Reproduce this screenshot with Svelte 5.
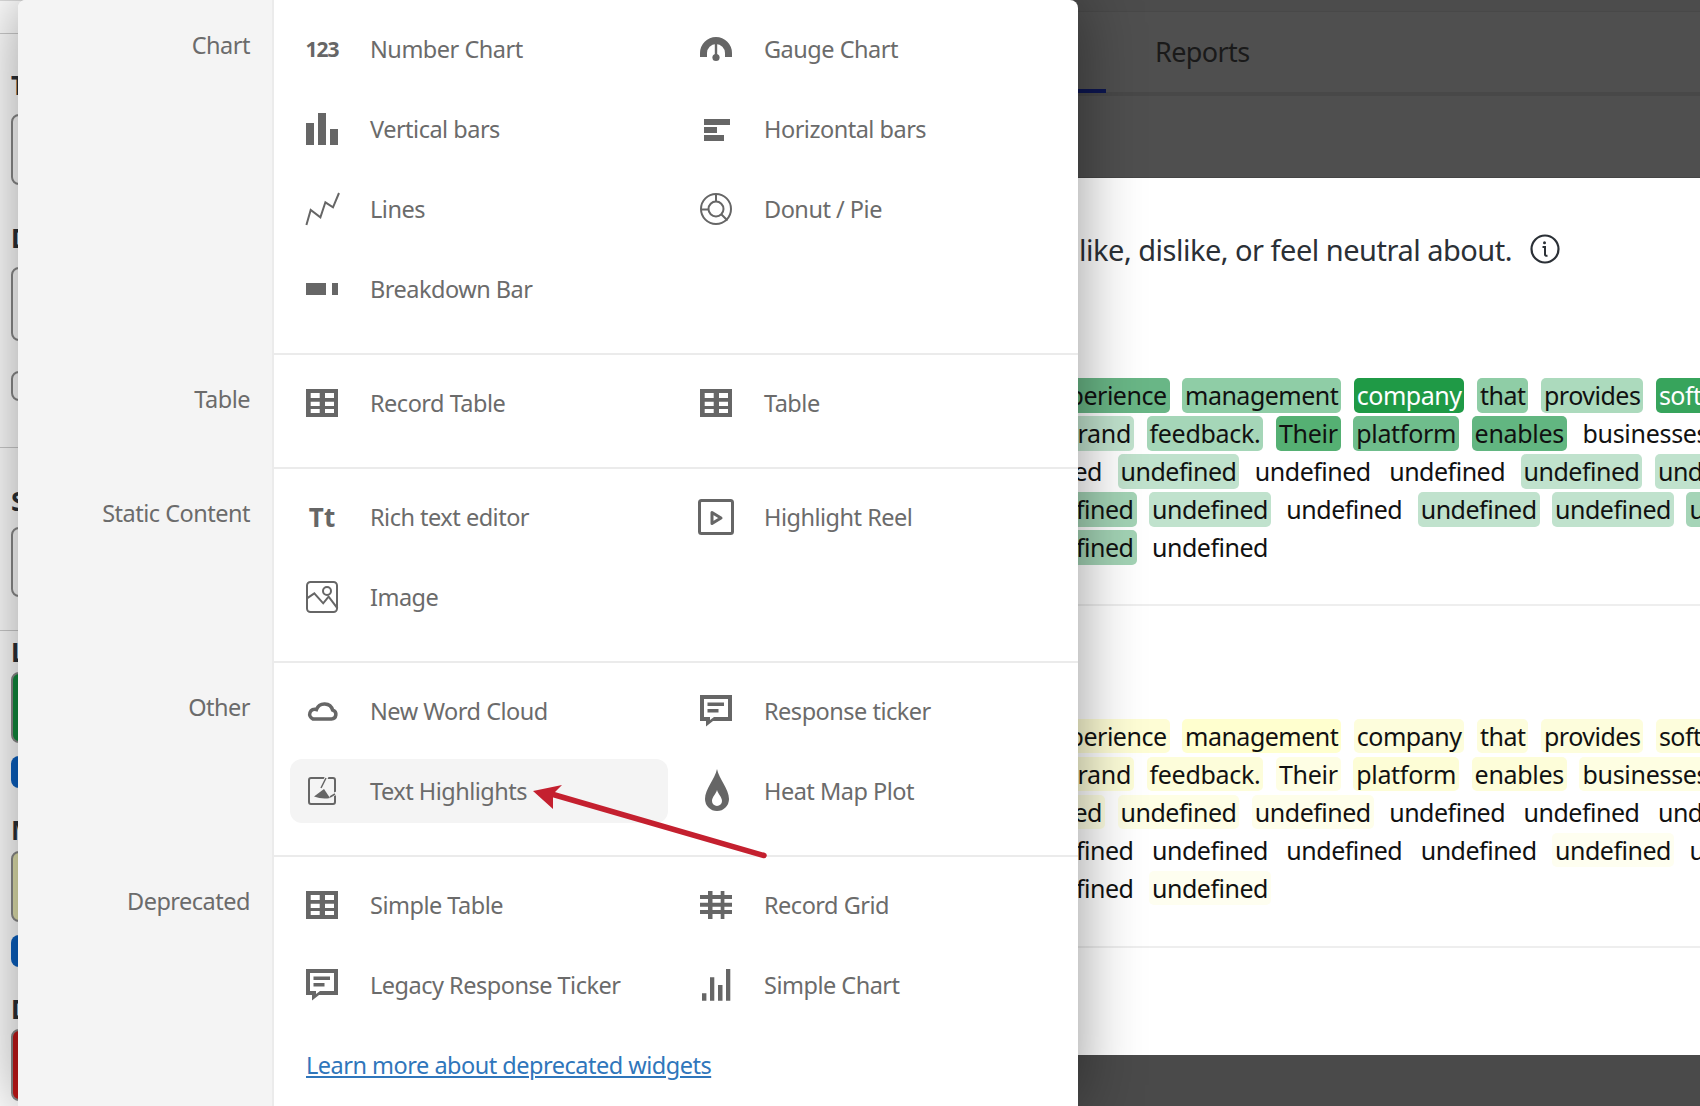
<script>
	const sections = [
		{
			label: "Chart",
			items: [
				["Number Chart", "number"],
				["Gauge Chart", "gauge"],
				["Vertical bars", "vbars"],
				["Horizontal bars", "hbars"],
				["Lines", "lines"],
				["Donut / Pie", "donut"],
				["Breakdown Bar", "breakdown"]
			]
		},
		{
			label: "Table",
			items: [
				["Record Table", "table"],
				["Table", "table"]
			]
		},
		{
			label: "Static Content",
			items: [
				["Rich text editor", "rich"],
				["Highlight Reel", "reel"],
				["Image", "image"]
			]
		},
		{
			label: "Other",
			items: [
				["New Word Cloud", "cloud"],
				["Response ticker", "ticker"],
				["Text Highlights", "highlights", true],
				["Heat Map Plot", "flame"]
			]
		},
		{
			label: "Deprecated",
			items: [
				["Simple Table", "table"],
				["Record Grid", "grid"],
				["Legacy Response Ticker", "ticker"],
				["Simple Chart", "simple"]
			]
		}
	];

	const u = "undefined";
	const greenLines = [
		{ at: 472.5, ls: -0.5, lead: ["experience", "#69b686"], words: [["management", "#8fcda6"], ["company", "#1f9a46", true], ["that", "#8fcda6"], ["provides", "#acdabd"], ["software", "#37a45c", true]] },
		{ at: 437, ls: -0.3, lead: ["brand", "#c0e2cd"], words: [["feedback.", "#a5d6b8"], ["Their", "#55b073"], ["platform", "#6fbd8c"], ["enables", "#62b681"], ["businesses", ""]] },
		{ at: 408, ls: -0.5, lead: [u, ""], words: [[u, "#c0e2cd"], [u, ""], [u, ""], [u, "#c0e2cd"], [u, "#c0e2cd"]] },
		{ at: 439.5, ls: -0.5, lead: [u, "#a3d3b5"], words: [[u, "#c0e2cd"], [u, ""], [u, "#c0e2cd"], [u, "#c0e2cd"], [u, "#a5d4b7"]] },
		{ at: 439.5, ls: -0.5, lead: [u, "#a3d3b5"], words: [[u, ""]] }
	];
	const yellowLines = [
		{ at: 472.5, ls: -0.5, lead: ["experience", "#fefdd5"], words: [["management", "#ffffcf"], ["company", "#fdfddc"], ["that", "#fdfddc"], ["provides", "#fdfddc"], ["software", "#fdfddc"]] },
		{ at: 437, ls: -0.3, lead: ["brand", "#fdfdd8"], words: [["feedback.", "#fdfdda"], ["Their", "#fefee4"], ["platform", "#fdfdd6"], ["enables", "#fdfdd9"], ["businesses", "#fefee2"]] },
		{ at: 408, ls: -0.5, lead: [u, "#fdfde0"], words: [[u, "#fefee5"], [u, "#fefeea"], [u, ""], [u, ""], [u, ""]] },
		{ at: 439.5, ls: -0.5, lead: [u, ""], words: [[u, ""], [u, ""], [u, ""], [u, "#fefef0"], [u, ""]] },
		{ at: 439.5, ls: -0.5, lead: [u, ""], words: [[u, "#fefef0"]] }
	];
</script>

{#snippet icon(name)}
	{#if name === "number"}
		<span class="glyph num">123</span>
	{:else if name === "rich"}
		<span class="glyph tt">Tt</span>
	{:else}
		<svg class="ico" viewBox="0 0 32 32" aria-hidden="true">
			{#if name === "gauge"}
				<path d="M0 24v-4a16 16 0 0 1 32 0v4h-7v-4a9 9 0 0 0-18 0v4z" />
				<rect x="14.8" y="9" width="2.4" height="15" />
				<circle cx="16" cy="24.5" r="3.6" />
			{:else if name === "vbars"}
				<path d="M0 10h8v22H0zM12 0h8v32h-8zM24 16h8v16h-8z" />
			{:else if name === "hbars"}
				<path d="M4 6h26v6H4zM4 14h13v6H4zM4 22h20v6H4z" />
			{:else if name === "lines"}
				<polyline class="line" stroke-width="2" points="0.4,32 4.7,17 14.4,24.3 19.4,9.3 27,14.3 33,0" />
			{:else if name === "donut"}
				<circle class="line" stroke-width="2" cx="16" cy="16" r="15" />
				<circle class="line" stroke-width="2" cx="16" cy="16" r="7.5" />
				<path class="line" stroke-width="2" d="M16 1v7.5M1 16.5h7.500M21.500 21.500l6 6" />
			{:else if name === "breakdown"}
				<path d="M0 10h20v12H0zM26 10h6v12h-6z" />
			{:else if name === "table"}
				<path fill-rule="evenodd" d="M0 2h32v28H0zM4.700 6v5h9V6zM19 6v5h9V6zM4.700 14.700V19h9v-4.300zM19 14.700V19h9v-4.300zM4.700 22v4h9v-4zM19 22v4h9v-4z" />
			{:else if name === "reel"}
				<rect class="line" stroke-width="3" x="-0.500" y="-0.500" width="33" height="33" rx="2" />
				<path class="line" stroke-width="3" stroke-linejoin="round" d="M12 11.500v11l9-5.500z" />
			{:else if name === "image"}
				<rect class="line" stroke-width="2" x="1" y="1" width="30" height="30" rx="3.500" />
				<circle class="line" stroke-width="2" cx="21" cy="10" r="4" />
				<polyline class="line" stroke-width="2" points="1,17.300 8.300,12.300 17.200,22.300 22.600,15.700 31.500,27.300" />
			{:else if name === "cloud"}
				<path class="line" stroke-width="3.500" d="M7 24h18.500a4.500 4.500 0 0 0 1.200-8.800a8.500 8.500 0 0 0-16.200-.700a5 5 0 0 0-3.500 9.500z" />
			{:else if name === "ticker"}
				<path fill-rule="evenodd" d="M0 0h32v26H13l-7 5.500V26H0zM4 4v18h6v3l4-3h14V4z" />
				<path d="M7.500 7.500H24V11H7.500zM7.500 14h11v3.500h-11z" />
			{:else if name === "highlights"}
				<rect class="line" stroke-width="2" x="3" y="3" width="26" height="26" rx="2" />
				<path d="M18 14 8 21.500q8 3 16 1.500z" />
				<path class="cut-line" d="M21 1l-5 11M24 21l7-3" />
				<path class="line thin" d="M20 3l-5 10M24 22l5-3" />
			{:else if name === "flame"}
				<path fill-rule="evenodd" d="M17-6c2 10 12 20 12 30a12 12 0 0 1-24 0C5 14 15 4 17-6zM17 15c-1 4-5 7-5 11a5 5 0 0 0 10 0c0-4-4-7-5-11z" />
			{:else if name === "grid"}
				<path d="M0 6h32v4H0zM0 13.700h32v4H0zM0 21h32v4H0zM8 2h4.500v28H8zM20.700 2h3.700v28h-3.700z" />
			{:else if name === "simple"}
				<path d="M2 24.300h4.400v7.400H2zM10 8.300h4.300v23.400H10zM18 16h4.500v15.700H18zM26 0h4.300v31.700H26z" />
			{/if}
		</svg>
	{/if}
{/snippet}

{#snippet lines(list)}
	{#each list as line}
		<div class="words" style="letter-spacing: {line.ls}px">
			<div class="lead" style="width: {line.at}px">
				<span class="tag" style="background: {line.lead[1] || 'transparent'}">{line.lead[0]}</span>
			</div>
			{#each line.words as w}
				<span class="tag" class:light={w[2]} style="background: {w[1] || 'transparent'}">{w[0]}</span>
			{/each}
		</div>
	{/each}
{/snippet}

<div class="page">
	<aside class="side">
		<div class="side-top"></div>
		<b class="t-title">Title</b>
		<div class="box b-title"></div>
		<b class="t-desc">Description</b>
		<div class="box b-desc"></div>
		<div class="box b-check"></div>
		<div class="rule r-one"></div>
		<b class="t-sent">Scale</b>
		<div class="box b-sent"></div>
		<div class="rule r-two"></div>
		<b class="t-like">Like</b>
		<div class="box green"></div>
		<div class="pill"></div>
		<b class="t-mid">Mixed</b>
		<div class="box pale"></div>
		<div class="pill"></div>
		<b class="t-dis">Dislike</b>
		<div class="box red"></div>
	</aside>

	<main class="main">
		<header class="head">
			<div class="band"></div>
			<nav class="tabs">
				<span class="tab active">Edit</span>
				<span class="tab">Reports</span>
			</nav>
		</header>
		<section class="body">
			<div class="question">
				<span>Highlight what you like, dislike, or feel neutral about.</span>
				<svg class="info" viewBox="0 0 30 30" aria-hidden="true">
					<circle cx="15" cy="15" r="13.500" fill="none" stroke="#2b3036" stroke-width="2.200" />
					<circle cx="14.500" cy="8.800" r="1.500" fill="#2b3036" />
					<path d="M12.500 13h2.500v7.500q0 1.500 2.500 1.200" fill="none" stroke="#2b3036" stroke-width="2" />
				</svg>
			</div>
			<div class="block first">
				{@render lines(greenLines)}
			</div>
			<div class="block second">
				{@render lines(yellowLines)}
			</div>
		</section>
		<footer class="foot"></footer>
	</main>

	<div class="panel">
		{#each sections as s}
			<div class="section">
				<div class="label">{s.label}</div>
				<div class="items">
					<div class="grid">
						{#each s.items as item}
							<div class="row" class:hot={item[2]}>
								<span class="slot">{@render icon(item[1])}</span>
								<span>{item[0]}</span>
							</div>
						{/each}
					</div>
					{#if s.label === "Deprecated"}
						<a class="more" href="#more">Learn more about deprecated widgets</a>
					{/if}
				</div>
			</div>
		{/each}
	</div>

	<svg class="arrow" viewBox="0 0 1700 1106" aria-hidden="true">
		<line x1="764" y1="855.500" x2="548" y2="793" stroke="#c4202f" stroke-width="5.500" stroke-linecap="round" />
		<path d="M533 791 562 785 553 794 553 809z" fill="#c4202f" />
	</svg>
</div>

<style>
	:global(body) {
		background: #fff;
		overflow: hidden;
	}

	.page {
		position: relative;
		display: flex;
		width: 1700px;
		height: 1106px;
		overflow: hidden;
		font-family: "Noto Sans", sans-serif;
	}

	/* sidebar, mostly hidden behind the widget menu */
	.side {
		width: 697px;
		flex: none;
		box-sizing: border-box;
		border-top: 1px solid #ddd;
		padding-left: 11px;
		display: flex;
		flex-direction: column;
		color: #2b3036;
		background: #fff;
	}

	.side b {
		font-size: 26px;
		line-height: 20px;
	}

	.side-top {
		height: 32px;
		margin-left: -11px;
		border-bottom: 1px solid #ccc;
	}

	.rule {
		margin-left: -11px;
		height: 1px;
		background: #ccc;
	}

	.box {
		border: 2px solid #8a8a8a;
		border-radius: 8px;
		box-sizing: border-box;
		flex: none;
	}

	.t-title { margin-top: 41px; }
	.b-title { margin-top: 19px; height: 71px; }
	.t-desc { margin-top: 43px; }
	.b-desc { margin-top: 19px; height: 74px; }
	.b-check { margin-top: 30px; height: 30px; }
	.r-one { margin-top: 46px; }
	.t-sent { margin-top: 43px; }
	.b-sent { margin-top: 16px; height: 70px; }
	.r-two { margin-top: 33px; }
	.t-like { margin-top: 11px; }

	.green {
		margin-top: 10px;
		height: 71px;
		background: #108a3c;
	}

	.pill {
		margin-top: 13px;
		height: 32px;
		flex: none;
		border-radius: 8px;
		background: #0b60c0;
	}

	.t-mid { margin-top: 32px; }

	.pale {
		margin-top: 11px;
		height: 71px;
		background: #e3e3ae;
	}

	.t-dis { margin-top: 32px; }

	.red {
		margin-top: 10px;
		height: 72px;
		background: #c01818;
	}

	/* main column, under the dark overlay */
	.main {
		flex: 1;
		min-width: 0;
		display: flex;
		flex-direction: column;
		overflow: hidden;
	}

	.head {
		height: 178px;
		flex: none;
		box-sizing: border-box;
		background: #4f4f4f;
		border-bottom: 1px solid #454545;
	}

	.band {
		height: 11px;
		background: #4c4c4c;
		border-bottom: 1px solid #484848;
	}

	.tabs {
		display: flex;
		gap: 49px;
		height: 84px;
		box-sizing: border-box;
		padding-left: 290px;
		border-bottom: 4px solid #484848;
	}

	.tab {
		height: 81px;
		box-sizing: border-box;
		padding-top: 20px;
		font-size: 27px;
		letter-spacing: -0.6px;
		line-height: 40px;
		color: #1a1a1a;
	}

	.tab.active {
		width: 119px;
		border-bottom: 4px solid #0d1650;
	}

	.body {
		flex: 1;
		min-height: 0;
		background: #fff;
	}

	.question {
		display: flex;
		justify-content: flex-end;
		align-items: center;
		gap: 18px;
		height: 40px;
		margin-top: 51px;
		padding-right: 140px;
		font-size: 29px;
		letter-spacing: -0.5px;
		color: #2b3036;
		white-space: nowrap;
	}

	.info {
		width: 30px;
		height: 30px;
		flex: none;
	}

	.block {
		display: flex;
		flex-direction: column;
		gap: 3.500px;
		padding-bottom: 39px;
		border-bottom: 2px solid #eee;
	}

	.first {
		margin-top: 109px;
	}

	.second {
		margin-top: 113px;
		padding-bottom: 41px;
	}

	.words {
		display: flex;
		gap: 12.500px;
		height: 34.500px;
		white-space: nowrap;
		font-size: 25px;
		line-height: 34.500px;
		color: #111;
	}

	.lead {
		flex: none;
		display: flex;
		justify-content: flex-end;
	}

	.tag {
		flex: none;
		padding: 0 3px;
		border-radius: 5px;
	}

	.tag.light {
		color: #fff;
	}

	.foot {
		height: 51px;
		flex: none;
		background: #4a4a4a;
	}

	/* widget menu */
	.panel {
		position: absolute;
		left: 18px;
		top: 0;
		width: 1060px;
		height: 1106px;
		display: flex;
		flex-direction: column;
		background: #fff;
		border-radius: 8px 8px 0 0;
		box-shadow: 0 0 64px rgba(0, 0, 0, 0.42);
		overflow: hidden;
		font-size: 23.500px;
		letter-spacing: -0.5px;
		line-height: 32px;
		color: #6b6b6b;
	}

	.section {
		display: flex;
	}

	.section:last-child {
		flex: 1;
	}

	.label {
		width: 256px;
		flex: none;
		box-sizing: border-box;
		padding: 28px 22px 0 0;
		text-align: right;
		background: #f4f4f4;
		border-right: 2px solid #ebebeb;
	}

	.section:first-child .label {
		padding-top: 29px;
	}

	.items {
		flex: 1;
		padding: 16px 0 32px 16px;
		border-bottom: 2px solid #ebebeb;
	}

	.section:first-child .items {
		padding-top: 17px;
	}

	.section:last-child .items {
		border-bottom: 0;
		padding-bottom: 0;
	}

	.grid {
		display: grid;
		grid-template-columns: 378px 378px;
		column-gap: 16px;
		row-gap: 16px;
	}

	.row {
		display: flex;
		align-items: center;
		gap: 32px;
		height: 64px;
		padding-left: 16px;
		border-radius: 12px;
	}

	.row.hot {
		background: #f4f4f4;
	}

	.slot {
		width: 32px;
		height: 32px;
		flex: none;
		display: flex;
		align-items: center;
		justify-content: center;
	}

	.ico {
		width: 32px;
		height: 32px;
		overflow: visible;
		fill: #666;
	}

	.line {
		fill: none;
		stroke: #666;
	}

	.thin {
		stroke-width: 1.500;
	}

	.cut-line {
		fill: none;
		stroke: #f4f4f4;
		stroke-width: 3.500;
	}

	.glyph {
		color: #666;
		font-weight: 700;
		font-family: "Open Sans", sans-serif;
		line-height: 32px;
		letter-spacing: 0;
		white-space: nowrap;
	}

	.num {
		font-size: 21px;
		letter-spacing: -1px;
	}

	.tt {
		font-size: 26px;
	}

	.more {
		display: block;
		width: max-content;
		margin: 32px 0 0 16px;
		color: #2f76bb;
		text-decoration: underline;
	}

	.arrow {
		position: absolute;
		left: 0;
		top: 0;
		width: 1700px;
		height: 1106px;
		pointer-events: none;
	}
</style>
